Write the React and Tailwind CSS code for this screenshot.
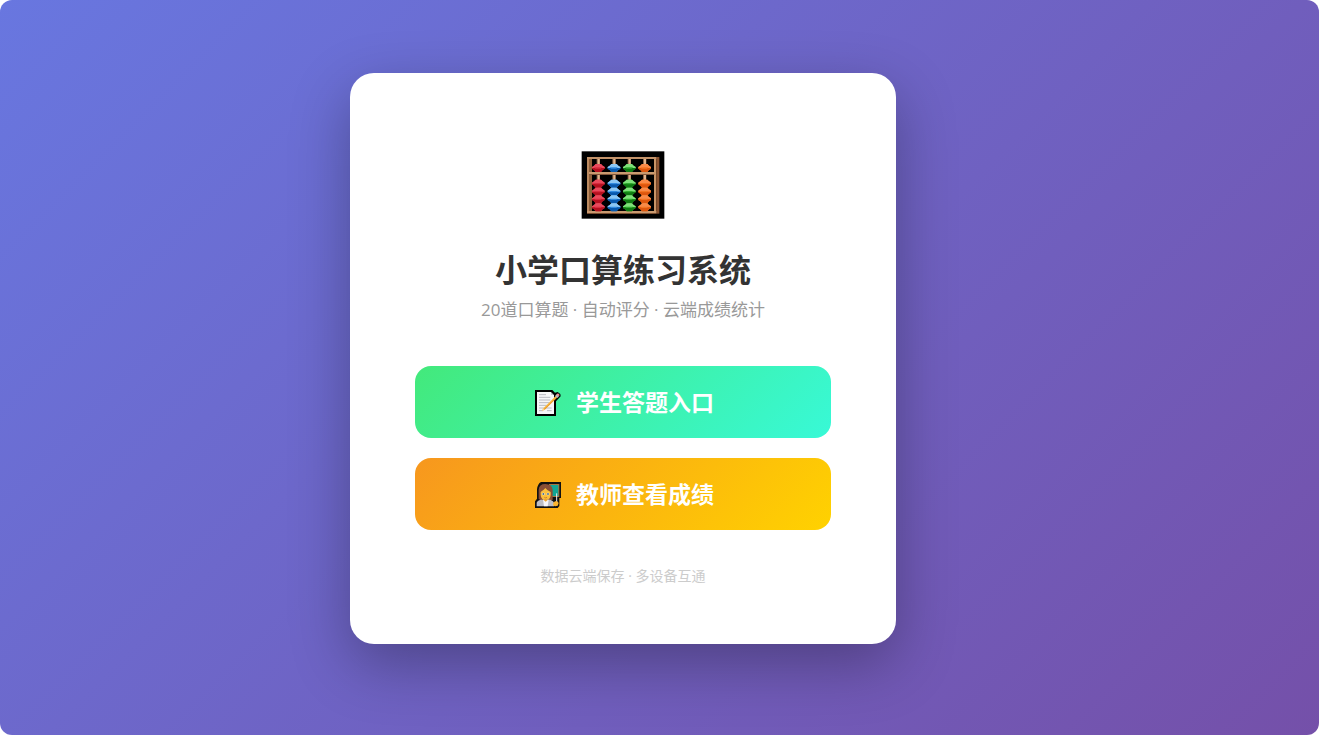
const BEAD_COLUMNS = [
  { x: 79, light: '#e84a5c', mid: '#d92a3e', dark: '#b5101f' },
  { x: 126, light: '#8cc8f5', mid: '#2f8ae0', dark: '#0858ac' },
  { x: 172, light: '#7fe07a', mid: '#2fae2f', dark: '#0f7a12' },
  { x: 218, light: '#f98a48', mid: '#f47420', dark: '#dd560e' },
];

const BEAD_ROWS = [66, 113, 137, 160, 184];

function Bead({ x, y, light, mid, dark }) {
  return (
    <g transform={`translate(${x} ${y})`}>
      <path d="M-8 0H8L13 5L19 9V14L13 18L8 24H-8L-13 18L-19 14V9L-13 5Z" fill={mid} />
      <path d="M-8 0H8L13 5L19 9V12H-19V9L-13 5Z" fill={light} />
      <path d="M-19 12H19V14L13 18L8 24H-8L-13 18L-19 14Z" fill={dark} />
      <path d="M-13 10H11L7 14H-9Z" fill={mid} />
    </g>
  );
}

function AbacusIcon() {
  return (
    <svg viewBox="27 27 252 204" className="w-[84px] h-[68px]" aria-hidden="true">
      <rect x="29" y="28" width="248" height="202" fill="#000" />
      <rect x="45" y="45" width="15" height="170" fill="#bb8a60" />
      <rect x="51" y="51" width="9" height="158" fill="#8f5f3a" />
      <rect x="246" y="45" width="7" height="170" fill="#c99466" />
      <rect x="253" y="45" width="9" height="170" fill="#8a5230" />
      {BEAD_COLUMNS.map(({ x }) => (
        <g key={x}>
          <rect x={x - 5} y="50" width="10" height="158" fill="#8f6748" />
          <rect x={x - 2} y="50" width="6" height="158" fill="#e0b48e" />
        </g>
      ))}
      <rect x="45" y="45" width="208" height="6" fill="#c4936a" />
      <rect x="51" y="90" width="196" height="6" fill="#c99a70" />
      <rect x="51" y="96" width="196" height="3" fill="#80563a" />
      <rect x="45" y="207" width="208" height="6" fill="#c99a70" />
      <rect x="45" y="213" width="208" height="3" fill="#7a4e30" />
      {BEAD_COLUMNS.map(col => BEAD_ROWS.map(y => <Bead key={`${col.x}-${y}`} {...col} y={y} />))}
    </svg>
  );
}

function MemoIcon() {
  return (
    <svg viewBox="21 18 84 84" className="w-7 h-7 shrink-0 overflow-visible" aria-hidden="true">
      <path d="M30 24H82L90 32L98 30L106 36L107 43L93 58V102H30Z" fill="#000" />
      <path d="M36 30H78V39H87V96H36Z" fill="#f6f6f8" />
      <path d="M78 30V39H87Z" fill="#c9cad0" />
      <path d="M42 38H63M42 46H76M42 54H76M42 62H74M42 70H68M42 78H80M42 86H54M66 86H80" stroke="#b9bac2" strokeWidth="3" />
      <path d="M55 79L92 42L97 46L59 83L51 87Z" fill="#f9bd45" />
      <path d="M57 81L95 44L97 46L59 83Z" fill="#e8962e" />
      <path d="M90 42L95 37L102 43L97 48Z" fill="#b9bcc4" />
      <path d="M94 38Q97 33 101 35Q106 38 102 43Z" fill="#ef8f92" />
      <path d="M54 79L59 84L51 87Z" fill="#f5d3a0" />
    </svg>
  );
}

function TeacherIcon() {
  return (
    <svg viewBox="21 18 84 84" className="w-7 h-7 shrink-0 overflow-visible" aria-hidden="true">
      <path d="M48 24H108V72H103V96L98 102H30V82L36 74V46Q38 29 48 24Z" fill="#111" />
      <rect x="72" y="30" width="31" height="39" fill="#a9743f" />
      <rect x="74" y="33" width="26" height="33" fill="#12a594" />
      <path d="M41 75V47Q42 30 61 30Q82 30 83 48V77L75 80H49Z" fill="#8a4f35" />
      <path d="M47 54Q58 47 61 42Q66 49 77 54V63Q76 78 62 78Q48 78 47 63Z" fill="#fcc03c" />
      <path d="M35 97V87Q36 79 48 77H76Q86 80 88 88L87 97Z" fill="#bcbec6" />
      <path d="M54 77H71L68 97H57Z" fill="#f7f7fa" />
      <path d="M56 74H68V78L62 83L56 78Z" fill="#eda52f" />
      <circle cx="55" cy="60" r="4" fill="#fff" />
      <circle cx="69" cy="60" r="4" fill="#fff" />
      <circle cx="55" cy="60" r="3" fill="#4c6f86" />
      <circle cx="69" cy="60" r="3" fill="#4c6f86" />
      <path d="M58 70Q62 73 66 70" stroke="#b4652a" strokeWidth="2" fill="none" />
      <path d="M95 58V88" stroke="#eef0f4" strokeWidth="3" />
      <path d="M85 86L90 82H97L101 87L98 95L90 97L84 94Z" fill="#fbb52f" />
    </svg>
  );
}

export default function App() {
  return (
    <div className="min-h-screen bg-white">
      <main className="min-h-screen flex items-start justify-center pt-[73px] pb-16 pr-[73px] rounded-xl bg-[linear-gradient(135deg,#667eea_-19%,#764ba2_113%)] font-['Open_Sans','Noto_Sans_CJK_SC',sans-serif]">
        <section className="w-full max-w-[546px] pt-14 pb-[58px] px-[65px] rounded-3xl bg-white text-center shadow-[0_20px_60px_rgba(0,0,0,0.3)]">
          <div className="h-28 flex items-center justify-center"><AbacusIcon /></div>
          <h1 className="mt-2 text-[32px] leading-[42px] font-bold text-[#333]">小学口算练习系统</h1>
          <p className="mt-2 text-[17px] leading-[22px] text-[#999]">20道口算题 · 自动评分 · 云端成绩统计</p>

          <div className="mt-[45px] flex flex-col gap-5">
            <button type="button" className="h-[72px] flex items-center justify-center gap-4 rounded-2xl bg-[linear-gradient(135deg,#43e97b_0%,#38f9d7_100%)] text-[23px] font-bold text-white cursor-pointer">
              <MemoIcon />
              <span>学生答题入口</span>
            </button>
            <button type="button" className="h-[72px] flex items-center justify-center gap-4 rounded-2xl bg-[linear-gradient(135deg,#f7971e_0%,#ffd200_100%)] text-[23px] font-bold text-white cursor-pointer">
              <TeacherIcon />
              <span>教师查看成绩</span>
            </button>
          </div>

          <p className="mt-9 text-sm leading-5 text-[#ccc]">数据云端保存 · 多设备互通</p>
        </section>
      </main>
    </div>
  );
}
